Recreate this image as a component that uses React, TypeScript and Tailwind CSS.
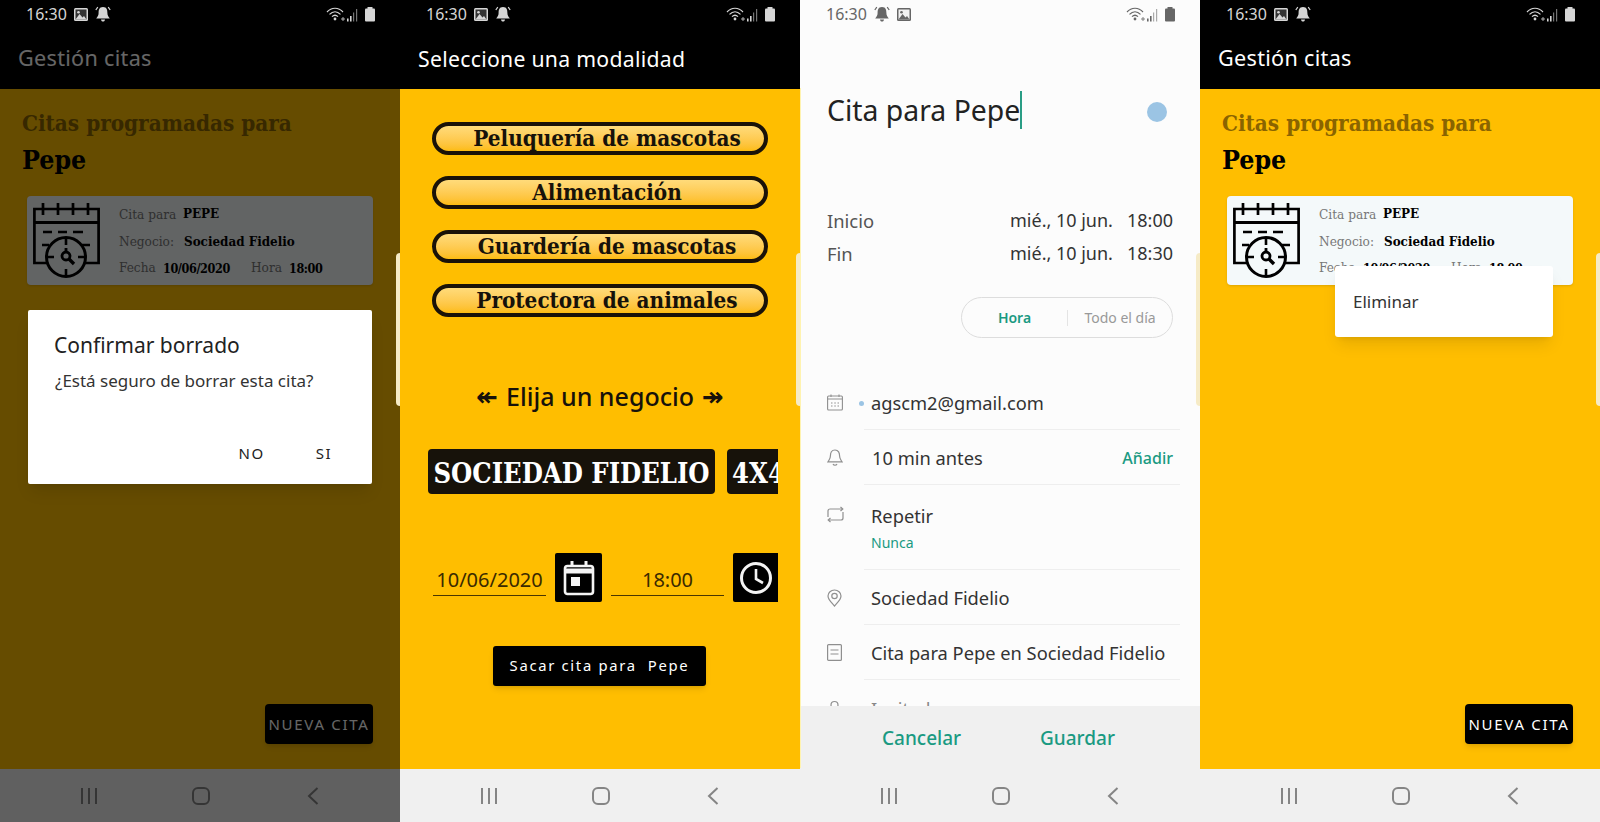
import React from "react";

const sans = "font-['Noto_Sans','Open_Sans',sans-serif]";
const serif = "font-['DejaVu_Serif_Condensed','Liberation_Serif',serif]";

function ImageIcon({ c, inner }: { c: string; inner: string }) {
  return (
    <svg width="14" height="13" viewBox="0 0 14 13">
      <rect x="0" y="0" width="14" height="13" rx="1.5" fill={c} />
      <rect x="1.5" y="1.5" width="11" height="10" fill={inner} />
      <path d="M1.5 11.5 L5.5 6 L8.5 9.5 L10 8 L12.5 11.5 Z" fill={c} />
      <circle cx="4.5" cy="4.3" r="1.3" fill={c} />
    </svg>
  );
}

function BellIcon({ c }: { c: string }) {
  return (
    <svg width="16" height="16" viewBox="0 0 16 16">
      <path d="M8 1 C4.2 1 3.6 4 3.6 7 C3.6 9.5 2.5 10.8 1.2 12.5 H14.8 C13.5 10.8 12.4 9.5 12.4 7 C12.4 4 11.8 1 8 1 Z" fill={c} />
      <path d="M6 13.4 H10 C9.8 15 8.7 15.6 8 15.6 C7.3 15.6 6.2 15 6 13.4 Z" fill={c} />
      <path d="M2.8 1.2 L0.8 4 M13.2 1.2 L15.2 4" stroke={c} strokeWidth="1.2" />
    </svg>
  );
}

function RightStatus({ c }: { c: string }) {
  return (
    <svg width="50" height="16" viewBox="0 0 50 16">
      <g fill="none" stroke={c} strokeWidth="1.2">
        <path d="M1 6 C5.5 1 12.5 1 17 6" />
        <path d="M3.5 8.3 C6.8 5 11.2 5 14.5 8.3" />
        <path d="M6 10.6 C8 8.8 10 8.8 12 10.6" />
      </g>
      <circle cx="9" cy="13" r="1.4" fill={c} />
      <path d="M15 13 H19 M17 11 V15" stroke={c} strokeWidth="0.8" />
      <rect x="21" y="12.5" width="1.6" height="3" fill={c} />
      <rect x="24" y="10" width="1.6" height="5.5" fill={c} />
      <rect x="27" y="6.5" width="1.2" height="9" fill={c} opacity="0.55" />
      <rect x="30" y="3" width="1.2" height="12.5" fill={c} opacity="0.55" />
      <rect x="39" y="2.5" width="10" height="13" rx="1" fill={c} />
      <rect x="41.5" y="1" width="5" height="2" fill={c} />
    </svg>
  );
}

function StatusBar({ dark, swap }: { dark?: boolean; swap?: boolean }) {
  const c = dark ? "#666666" : "#d6d6d6";
  const inner = dark ? "#f2f2f2" : "#333333";
  return (
    <div className={`h-[28px] pl-[26px] pr-[24px] flex items-center justify-between ${dark ? "bg-[#fcfcfc]" : "bg-black"}`}>
      <div className="flex items-center gap-[7px]">
        <span className={`${sans} text-[16px] leading-[28px] w-[41px] ${dark ? "text-[#666666]" : "text-[#d6d6d6]"}`}>16:30</span>
        {swap ? (
          <>
            <BellIcon c={c} />
            <ImageIcon c={c} inner={inner} />
          </>
        ) : (
          <>
            <ImageIcon c={c} inner={inner} />
            <BellIcon c={c} />
          </>
        )}
      </div>
      <RightStatus c={c} />
    </div>
  );
}

function NavBar() {
  return (
    <div className="h-[53px] shrink-0 bg-[#f0f0f0] pl-[80px] pr-[81px] flex items-center justify-between">
      <svg width="18" height="18" viewBox="0 0 18 18" fill="none" stroke="#858585" strokeWidth="2">
        <path d="M2 1 V17 M9 1 V17 M16 1 V17" />
      </svg>
      <svg className="mr-[3px]" width="18" height="18" viewBox="0 0 18 18" fill="none" stroke="#858585" strokeWidth="2">
        <rect x="1" y="1" width="16" height="16" rx="5" />
      </svg>
      <svg width="12" height="18" viewBox="0 0 12 18" fill="none" stroke="#858585" strokeWidth="2">
        <path d="M10.5 1 L2 9 L10.5 17" />
      </svg>
    </div>
  );
}

function Handle() {
  return <div className="absolute right-0 top-[253px] w-[4px] h-[153px] rounded-l-[5px] bg-[#f6ebc6]" />;
}

function CalendarClock() {
  return (
    <svg className="shrink-0" width="67" height="75" viewBox="0 0 67 75" fill="none" stroke="#000" strokeWidth="2.7">
      <path d="M14 60 H1.4 V6 H65.6 V60 H52" />
      <path d="M1.4 19.5 H65.6" strokeWidth="3" />
      <path d="M10 0 V12 M25 0 V12 M40 0 V12 M55 0 V12" />
      <path d="M10 29 H19 M25 29 H34 M40 29 H50 M9 42 H16 M49 42 H57" strokeWidth="2.7" />
      <circle cx="33" cy="54" r="19.5" strokeWidth="3" />
      <path d="M33 34 V42 M33 66 V74 M13 54 H21 M45 54 H53" strokeWidth="2.6" />
      <circle cx="33" cy="53" r="4" strokeWidth="2.8" />
      <path d="M36 56 L41 61" strokeWidth="3.4" />
      <path d="M33 45 V49" strokeWidth="2.8" />
    </svg>
  );
}

function Card() {
  return (
    <div className="h-[89px] w-[346px] ml-[27px] mt-[16px] rounded-[4px] bg-[#f4f9fa] pl-[6px] pt-[7px] flex shadow-sm">
      <CalendarClock />
      <div className={`${serif} ml-[19px] -mt-[3px] text-[13.5px]`}>
        <div className="flex h-[28px] items-center">
          <span className="text-[#777777] w-[64px] font-normal">Cita para</span>
          <span className="font-bold text-black text-[13.3px]">PEPE</span>
        </div>
        <div className="flex h-[27px] items-center">
          <span className="text-[#777777] w-[65px]">Negocio:</span>
          <span className="font-bold text-black text-[13.3px]">Sociedad Fidelio</span>
        </div>
        <div className="flex h-[28px] items-center">
          <span className="text-[#777777] w-[44px] -mt-[4px]">Fecha</span>
          <span className="font-bold text-black text-[12.5px] tracking-[-0.4px] w-[88px] mt-[1px]">10/06/2020</span>
          <span className="text-[#777777] w-[38px] -mt-[4px]">Hora</span>
          <span className="font-bold text-black text-[12.5px] tracking-[-0.4px] mt-[1px]">18:00</span>
        </div>
      </div>
    </div>
  );
}

function ListContent() {
  return (
    <>
      <div className={`h-[61px] bg-black pl-[18px] flex items-center shrink-0 ${sans} text-white text-[21.6px] tracking-[0.3px]`}>
        Gestión citas
      </div>
      <div className="flex-1 bg-[#ffbe00] flex flex-col">
        <div className={`${serif} font-bold text-[22.3px] leading-[32px] pl-[22px] pt-[18px] text-[#8a6400]`}>Citas programadas para</div>
        <div className={`${serif} font-bold text-[26.5px] leading-[40px] pl-[22px] pt-[1px] text-black`}>Pepe</div>
        <Card />
        <div className="flex-1" />
        <div className={`self-end mr-[27px] mb-[25px] w-[108px] h-[40px] rounded-[4px] bg-black flex items-center justify-center text-white ${sans} text-[15px] tracking-[1.7px] whitespace-nowrap shadow-md`}>
          NUEVA CITA
        </div>
      </div>
      <NavBar />
    </>
  );
}

function Screen1() {
  return (
    <div className="relative w-[400px] h-[822px] flex flex-col overflow-hidden">
      <StatusBar />
      <div className="relative flex-1 flex flex-col">
        <ListContent />
        <div className="absolute inset-0 bg-black/60" />
        <div className={`absolute left-[28px] top-[282px] w-[344px] h-[174px] rounded-[2px] bg-white shadow-lg ${sans}`}>
          <div className="pl-[26px] pt-[19px] text-[21px] leading-[32px] text-[#222222]">Confirmar borrado</div>
          <div className="pl-[27px] pt-[6px] text-[17px] leading-[28px] text-[#333333]">¿Está seguro de borrar esta cita?</div>
          <div className="flex justify-end pr-[40px] pt-[47px] text-[15px] tracking-[1.5px] text-[#222222]">
            <span className="mr-[51px]">NO</span>
            <span>SI</span>
          </div>
        </div>
      </div>
      <Handle />
    </div>
  );
}

function Pill({ children }: { children: React.ReactNode }) {
  return (
    <div className={`h-[33px] w-[336px] rounded-full border-[4px] border-[#1a1208] bg-gradient-to-b from-[#ffdb7a] to-[#fdbc0c] flex items-center justify-center pl-[14px] ${serif} font-bold text-[22.3px] text-[#17120a] whitespace-nowrap`}>
      {children}
    </div>
  );
}

function Screen2() {
  return (
    <div className="relative w-[400px] h-[822px] flex flex-col overflow-hidden">
      <StatusBar />
      <div className={`h-[61px] bg-black pl-[18px] flex items-center shrink-0 ${sans} text-white text-[21.2px] tracking-[0.3px]`}>
        Seleccione una modalidad
      </div>
      <div className="flex-1 bg-[#ffbe00] flex flex-col pl-[32px] pr-[22px]">
        <div className="mt-[33px] flex flex-col gap-[21px]">
          <Pill>Peluquería de mascotas</Pill>
          <Pill>Alimentación</Pill>
          <Pill>Guardería de mascotas</Pill>
          <Pill>Protectora de animales</Pill>
        </div>
        <div className={`mt-[61px] mb-[1px] h-[38px] -ml-[32px] pl-[22px] flex items-center justify-center gap-[8px] text-[#17120a] ${sans} font-medium text-[25px]`}>
          <span className="font-['DejaVu_Sans',sans-serif] font-bold text-[26px]">↞</span>
          <span>Elija un negocio</span>
          <span className="font-['DejaVu_Sans',sans-serif] font-bold text-[26px]">↠</span>
        </div>
        <div className={`mt-[32px] -ml-[4px] flex gap-[12px] overflow-hidden ${serif} font-bold text-[27.1px] text-white whitespace-nowrap`}>
          <div className="h-[45px] w-[287px] shrink-0 rounded-[4px] bg-[#17120a] flex items-center justify-center pt-[6px]">SOCIEDAD FIDELIO</div>
          <div className="h-[45px] w-[80px] shrink-0 rounded-[4px] bg-[#17120a] flex items-center pl-[5px] pt-[6px]">4X4</div>
        </div>
        <div className={`mt-[59px] flex items-start ${sans} text-[20px] text-[#3a2a00]`}>
          <div className="w-[113px] h-[43px] pt-[13px] leading-[28px] text-center border-b border-[#4a3600] ml-[1px]">10/06/2020</div>
          <div className="ml-[9px] w-[47px] h-[49px] rounded-[2px] bg-black flex items-center justify-center">
            <svg width="32" height="36" viewBox="0 0 32 36" fill="none" stroke="#f4f4f4" strokeWidth="2.6">
              <rect x="2" y="6" width="28" height="28" rx="2.5" />
              <path d="M2 11 H30" strokeWidth="5" />
              <path d="M9 1 V7 M23 1 V7" strokeWidth="3" />
              <rect x="8" y="17" width="9" height="9" fill="#f4f4f4" stroke="none" />
            </svg>
          </div>
          <div className="ml-[9px] w-[113px] h-[43px] pt-[13px] leading-[28px] text-center border-b border-[#4a3600]">18:00</div>
          <div className="ml-[9px] w-[45px] h-[49px] rounded-l-[2px] bg-black flex items-center justify-center shrink-0">
            <svg width="34" height="34" viewBox="0 0 34 34" fill="none" stroke="#f4f4f4" strokeWidth="3">
              <circle cx="17" cy="17" r="14.5" />
              <path d="M17 8 V18 L24 22" strokeWidth="2.6" />
            </svg>
          </div>
        </div>
        <div className={`mt-[44px] ml-[61px] w-[213px] h-[40px] rounded-[3px] bg-black flex items-center justify-center pb-[2px] ${sans} text-white text-[14.8px] tracking-[1.7px] whitespace-pre shadow-md`}>
          Sacar cita para  Pepe
        </div>
      </div>
      <NavBar />
      <Handle />
    </div>
  );
}

function Row({ icon, h, pt, children }: { icon: React.ReactNode; h: number; pt: number; children: React.ReactNode }) {
  return (
    <div className="flex" style={{ height: h }}>
      <div className="w-[64px] shrink-0 pl-[27px]" style={{ paddingTop: pt }}>{icon}</div>
      <div className="flex-1 border-b border-[#eeeeee] mr-[20px] min-w-0">{children}</div>
    </div>
  );
}

function Screen3() {
  const ic = "#8f8f8f";
  return (
    <div className={`relative w-[400px] h-[822px] flex flex-col overflow-hidden bg-[#fcfcfc] ${sans}`}>
      <StatusBar dark swap />
      <div className="absolute left-0 top-[88px] w-[1px] h-[680px] bg-[#fff3b0]" />
      <div className="mt-[62px] h-[40px] pl-[27px] pr-[23px] flex items-center justify-between shrink-0">
        <div className="flex items-center text-[28.4px] text-[#222222] leading-[40px]">
          Cita para Pepe
          <span className="w-[2px] h-[38px] bg-[#2a9d85]" />
        </div>
        <span className="w-[20px] h-[20px] rounded-full bg-[#9bc4e4] mr-[10px] mt-[4px]" />
      </div>
      <div className="mt-[74px] pl-[27px] pr-[27px] text-[18.4px] text-[#555555] leading-[33px]">
        <div className="flex justify-between">
          <span>Inicio</span>
          <span className="text-[#333333] text-[18px] whitespace-pre">mié., 10 jun.   18:00</span>
        </div>
        <div className="flex justify-between">
          <span>Fin</span>
          <span className="text-[#333333] text-[18px] whitespace-pre">mié., 10 jun.   18:30</span>
        </div>
      </div>
      <div className="mt-[27px] ml-[161px] w-[212px] h-[41px] rounded-full border border-[#dddddd] flex items-center text-[14px] shrink-0">
        <span className="w-[105px] text-center font-semibold text-[#1a9a82]">Hora</span>
        <span className="w-px h-[16px] bg-[#e4e4e4]" />
        <span className="flex-1 text-center text-[#999999]">Todo el día</span>
      </div>
      <div className="mt-[37px] flex-1 overflow-hidden text-[18.3px] text-[#333333]">
        <Row h={55} pt={19} icon={
          <svg width="16" height="17" viewBox="0 0 16 17" fill="none" stroke={ic} strokeWidth="1.1">
            <rect x="0.6" y="2" width="14.8" height="14" rx="1" />
            <path d="M0.6 5 H15.4 M4 0.5 V3 M12 0.5 V3" />
            <path d="M4 9 H5.5 M7.3 9 H8.8 M10.5 9 H12 M4 12 H5.5 M7.3 12 H8.8 M10.5 12 H12" />
          </svg>
        }>
          <div className="flex items-center h-[54px] pt-[2px] -ml-[5px]">
            <span className="w-[5px] h-[5px] rounded-full bg-[#9bc4e4] mr-[7px]" />
            <span>agscm2@gmail.com</span>
          </div>
        </Row>
        <Row h={55} pt={19} icon={
          <svg width="16" height="18" viewBox="0 0 16 18" fill="none" stroke={ic} strokeWidth="1.2">
            <path d="M8 1 C4.5 1 3.4 4 3.4 7 C3.4 10 2 11 1 12.8 H15 C14 11 12.6 10 12.6 7 C12.6 4 11.5 1 8 1 Z" />
            <path d="M6 15 C6.8 16.6 9.2 16.6 10 15" />
          </svg>
        }>
          <div className="flex items-center justify-between h-[54px] pt-[2px] pl-[8px] pr-[7px]">
            <span>10 min antes</span>
            <span className="text-[#1a9a82] text-[16px] font-medium">Añadir</span>
          </div>
        </Row>
        <Row h={85} pt={21} icon={
          <svg width="17" height="17" viewBox="0 0 17 17" fill="none" stroke={ic} strokeWidth="1.2">
            <path d="M1 11 V5 C1 3.8 2 3 3 3 H15" />
            <path d="M16 6 V12 C16 13.2 15 14 14 14 H2" />
            <path d="M13.5 1 L15.8 3 L13.5 5 M3.5 12 L1.2 14 L3.5 16" />
          </svg>
        }>
          <div className="pl-[7px] pt-[15px] leading-[32px]">Repetir</div>
          <div className="pl-[7px] pt-[1px] text-[14px] leading-[20px] text-[#1a9a82]">Nunca</div>
        </Row>
        <Row h={55} pt={19} icon={
          <svg width="15" height="18" viewBox="0 0 15 18" fill="none" stroke={ic} strokeWidth="1.2">
            <path d="M7.5 17 C4 13 1 10.5 1 7 C1 3.5 4 1 7.5 1 C11 1 14 3.5 14 7 C14 10.5 11 13 7.5 17 Z" />
            <circle cx="7.5" cy="7" r="2.7" />
          </svg>
        }>
          <div className="flex items-center h-[54px] pt-[2px] pl-[7px]">Sociedad Fidelio</div>
        </Row>
        <Row h={55} pt={19} icon={
          <svg width="15" height="17" viewBox="0 0 15 17" fill="none" stroke={ic} strokeWidth="1.2">
            <rect x="0.6" y="0.6" width="13.8" height="15.8" rx="1" />
            <path d="M3.5 6 H11.5 M3.5 10 H11.5" />
          </svg>
        }>
          <div className="flex items-center h-[54px] pt-[2px] pl-[7px] whitespace-nowrap">Cita para Pepe en Sociedad Fidelio</div>
        </Row>
        <Row h={55} pt={20} icon={
          <svg width="15" height="17" viewBox="0 0 15 17" fill="none" stroke={ic} strokeWidth="1.2">
            <circle cx="7.5" cy="5" r="3.5" />
            <path d="M1 16 C1 12 4 10.5 7.5 10.5 C11 10.5 14 12 14 16" />
          </svg>
        }>
          <div className="pl-[7px] pt-[13px] leading-[32px] text-[#888888]">Invitado</div>
        </Row>
      </div>
      <div className="h-[63px] shrink-0 bg-[#f0f0f0] flex items-center pl-[82px] text-[19px] font-medium text-[#1a9a82] pt-[1px]">
        <span className="w-[158px]">Cancelar</span>
        <span>Guardar</span>
      </div>
      <NavBar />
      <Handle />
    </div>
  );
}

function Screen4() {
  return (
    <div className="relative w-[400px] h-[822px] flex flex-col overflow-hidden">
      <StatusBar />
      <div className="relative flex-1 flex flex-col">
        <ListContent />
        <div className={`absolute left-[135px] top-[238px] w-[218px] h-[71px] rounded-[3px] bg-white shadow-lg flex items-center pl-[18px] ${sans} text-[17px] text-[#333333]`}>
          Eliminar
        </div>
      </div>
      <Handle />
    </div>
  );
}

export default function App() {
  return (
    <div className="w-[1600px] h-[822px] flex overflow-hidden bg-black">
      <Screen1 />
      <Screen2 />
      <Screen3 />
      <Screen4 />
    </div>
  );
}
